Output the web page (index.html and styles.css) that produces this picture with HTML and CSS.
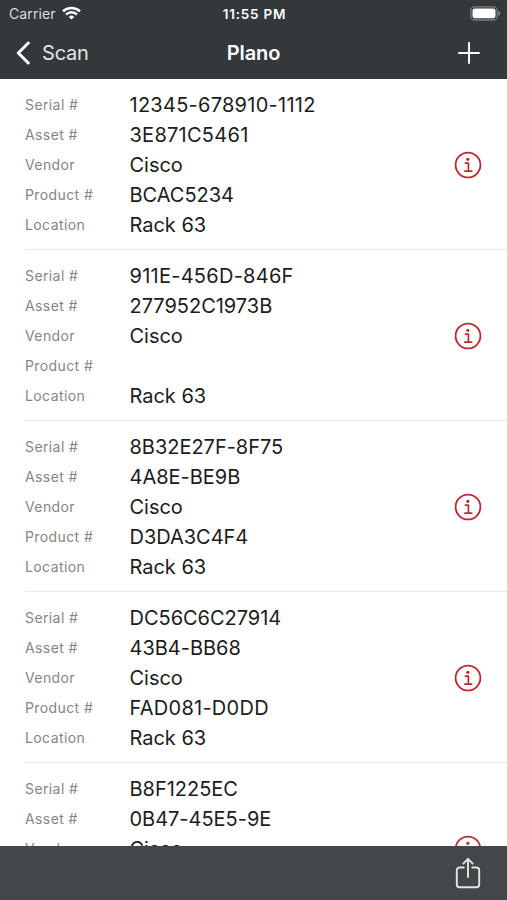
FILE: index.html
```html
<!DOCTYPE html>
<html lang="en">
<head>
    <meta charset="UTF-8">
    <meta name="viewport" content="width=device-width, initial-scale=1.0">
    <title>Plano</title>
    <link rel="stylesheet" href="styles.css">
</head>
<body>
    <header class="header">
        <div class="status-bar">
            <div class="carrier">
                <span>Carrier</span>
                <svg class="wifi" width="19" height="14" viewBox="0 0 19 14" fill="none" stroke="#fff" stroke-width="2.5">
                    <path d="M1 5.3a12.3 12.3 0 0 1 17 0"/>
                    <path d="M4.1 8.5a7.8 7.8 0 0 1 10.8 0"/>
                    <path d="M9.5 13.6L6.8 10.9a3.9 3.9 0 0 1 5.4 0z" fill="#fff" stroke="none"/>
                </svg>
            </div>
            <div class="time">11:55 PM</div>
            <svg class="battery" width="31" height="15" viewBox="0 0 31 15">
                <rect x=".8" y=".8" width="26.4" height="13.2" rx="3.8" fill="none" stroke="#7c7f81" stroke-width="1.3"/>
                <rect x="2.5" y="2.6" width="23" height="9.6" rx="2.2" fill="#fff"/>
                <path d="M28.4 5c2.4.9 2.4 3.9 0 4.8z" fill="#8c8f90"/>
            </svg>
        </div>
        <nav class="nav-bar">
            <a class="back" href="#">
                <svg width="15" height="24" viewBox="0 0 15 24" fill="none" stroke="#fff" stroke-width="3" stroke-linecap="round" stroke-linejoin="round">
                    <path d="M13.3 2L3.3 12l10 10"/>
                </svg>
                <span>Scan</span>
            </a>
            <h1 class="title">Plano</h1>
            <a class="add" href="#" aria-label="Add">
                <svg width="22" height="22" viewBox="0 0 22 22" stroke="#fff" stroke-width="1.9" stroke-linecap="round">
                    <path d="M11 1v20M1 11h20"/>
                </svg>
            </a>
        </nav>
    </header>

    <svg class="symbols">
        <symbol id="info" viewBox="0 0 28 28">
            <circle cx="14" cy="14" r="12.4" fill="none" stroke="#b92b30" stroke-width="1.8"/>
            <circle cx="13.8" cy="8.3" r="1.6" fill="#b92b30"/>
            <path d="M11.4 12.1h3v7.9M10.9 20.2h6.8" fill="none" stroke="#b92b30" stroke-width="1.7" stroke-linecap="round" stroke-linejoin="round"/>
        </symbol>
    </svg>

    <main class="list">
        <section class="item">
            <dl class="fields">
                <dt>Serial #</dt><dd class="loose">12345-678910-1112</dd>
                <dt>Asset #</dt><dd class="loose">3E871C5461</dd>
                <dt>Vendor</dt><dd>Cisco</dd>
                <dt>Product #</dt><dd>BCAC5234</dd>
                <dt>Location</dt><dd>Rack 63</dd>
            </dl>
            <svg class="info"><use href="#info"/></svg>
        </section>
        <section class="item">
            <dl class="fields">
                <dt>Serial #</dt><dd class="loose">911E-456D-846F</dd>
                <dt>Asset #</dt><dd>277952C1973B</dd>
                <dt>Vendor</dt><dd>Cisco</dd>
                <dt>Product #</dt><dd></dd>
                <dt>Location</dt><dd>Rack 63</dd>
            </dl>
            <svg class="info"><use href="#info"/></svg>
        </section>
        <section class="item">
            <dl class="fields">
                <dt>Serial #</dt><dd>8B32E27F-8F75</dd>
                <dt>Asset #</dt><dd>4A8E-BE9B</dd>
                <dt>Vendor</dt><dd>Cisco</dd>
                <dt>Product #</dt><dd>D3DA3C4F4</dd>
                <dt>Location</dt><dd>Rack 63</dd>
            </dl>
            <svg class="info"><use href="#info"/></svg>
        </section>
        <section class="item">
            <dl class="fields">
                <dt>Serial #</dt><dd>DC56C6C27914</dd>
                <dt>Asset #</dt><dd>43B4-BB68</dd>
                <dt>Vendor</dt><dd>Cisco</dd>
                <dt>Product #</dt><dd class="loose">FAD081-D0DD</dd>
                <dt>Location</dt><dd>Rack 63</dd>
            </dl>
            <svg class="info"><use href="#info"/></svg>
        </section>
        <section class="item">
            <dl class="fields">
                <dt>Serial #</dt><dd>B8F1225EC</dd>
                <dt>Asset #</dt><dd>0B47-45E5-9E</dd>
                <dt>Vendor</dt><dd>Cisco</dd>
            </dl>
            <svg class="info"><use href="#info"/></svg>
        </section>
    </main>

    <footer class="toolbar">
        <svg width="26" height="32" viewBox="0 0 26 32" fill="none" stroke="#e4e5e5" stroke-width="1.9" stroke-linecap="round" stroke-linejoin="round">
            <path d="M8.7 10.5H4.5a2.7 2.7 0 0 0-2.7 2.7v14.3a2.7 2.7 0 0 0 2.7 2.7h17a2.7 2.7 0 0 0 2.7-2.7V13.2a2.7 2.7 0 0 0-2.7-2.7h-4.2"/>
            <path d="M13 20V2M8.3 6.6L13 1.8l4.7 4.8"/>
        </svg>
    </footer>
</body>
</html>
```

FILE: styles.css
```css
* {
    box-sizing: border-box;
}
body {
    display: flex;
    flex-direction: column;
    height: 100vh;
    margin: 0;
    overflow: hidden;
    background: #fff;
    color: #1c1c1d;
    font-family: Inter, "Liberation Sans", sans-serif;
}
.header {
    flex: none;
    height: 79px;
    background: #33383b;
    color: #fff;
}
.status-bar {
    display: grid;
    grid-template-columns: 1fr auto 1fr;
    align-items: center;
    height: 27px;
    padding: 0 6px 0 9px;
    font-size: 14px;
}
.carrier {
    display: flex;
    align-items: center;
    gap: 6px;
    color: #dcddde;
    letter-spacing: 0.1px;
}
.wifi {
    margin-top: -1px;
}
.time {
    margin-right: 1px;
    font-size: 13.5px;
    font-weight: 600;
    letter-spacing: 0.8px;
}
.battery {
    justify-self: end;
}
.nav-bar {
    display: grid;
    grid-template-columns: 1fr auto 1fr;
    align-items: center;
    height: 51px;
    padding: 0 27px 0 15px;
}
.nav-bar a {
    display: flex;
    align-items: center;
    color: #e3e4e4;
    text-decoration: none;
}
.back {
    gap: 12px;
    font-size: 20px;
    letter-spacing: -0.2px;
}
.title {
    margin: 0 -12px 0 0;
    font-size: 20px;
    font-weight: 600;
    letter-spacing: -0.1px;
}
.nav-bar .add {
    justify-self: end;
}
.symbols {
    display: none;
}
.list {
    flex: 1;
    min-height: 0;
    overflow: hidden;
}
.item {
    display: flex;
    align-items: center;
    justify-content: space-between;
    height: 171px;
    margin-left: 25px;
    padding-right: 25px;
    border-bottom: 1px solid #e9e9ea;
}
.fields {
    display: grid;
    grid-template-columns: 104px auto;
    grid-auto-rows: 29.9px;
    align-self: flex-start;
    margin: 11px 0 0;
    line-height: 30px;
}
.fields dt {
    color: #858587;
    font-size: 14px;
    letter-spacing: 0.4px;
}
.fields dd {
    margin: 0;
    padding-left: 0.5px;
    font-size: 20px;
    letter-spacing: -0.02px;
}
.fields .loose {
    letter-spacing: 0.26px;
}
.info {
    width: 28px;
    height: 28px;
    margin-top: 2px;
}
.toolbar {
    display: flex;
    flex: none;
    align-items: center;
    justify-content: flex-end;
    height: 54px;
    padding-right: 26px;
    background: #444749;
}
```
